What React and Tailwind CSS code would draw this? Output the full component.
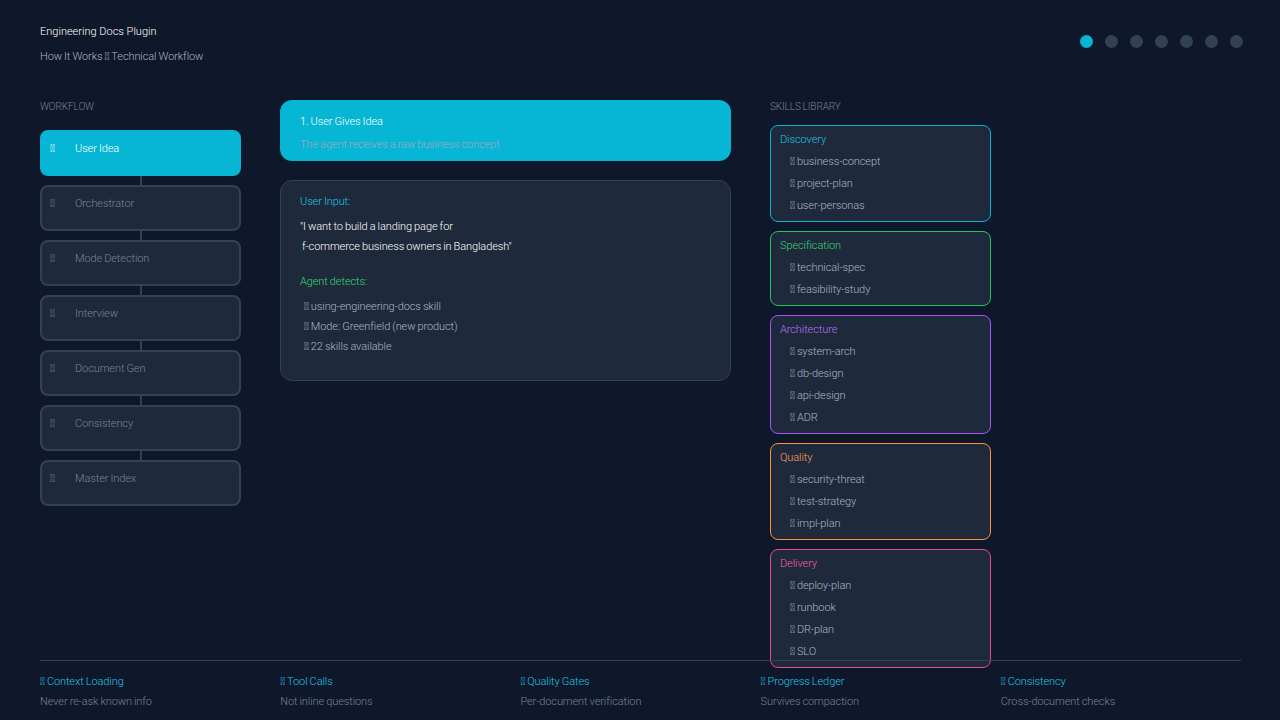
const STEPS = ["User Idea", "Orchestrator", "Mode Detection", "Interview", "Document Gen", "Consistency", "Master Index"];
const T = "\u{3FFFD}";
const GROUPS = [
  { name: "Discovery", box: "border-[#06b6d4]", text: "text-[#22c5e3]", items: ["business-concept", "project-plan", "user-personas"] },
  { name: "Specification", box: "border-[#22c55e]", text: "text-[#34d870]", items: ["technical-spec", "feasibility-study"] },
  { name: "Architecture", box: "border-[#a855f7]", text: "text-[#b871fa]", items: ["system-arch", "db-design", "api-design", "ADR"] },
  { name: "Quality", box: "border-[#fb923c]", text: "text-[#fda05a]", items: ["security-threat", "test-strategy", "impl-plan"] },
  { name: "Delivery", box: "border-[#ec4899]", text: "text-[#f45fa8]", items: ["deploy-plan", "runbook", "DR-plan", "SLO"] },
];
const FOOT = [
  ["Context Loading", "Never re-ask known info"],
  ["Tool Calls", "Not inline questions"],
  ["Quality Gates", "Per-document verification"],
  ["Progress Ledger", "Survives compaction"],
  ["Consistency", "Cross-document checks"],
];

export default function App() {
  return (
    <div className="relative h-[720px] w-[1280px] overflow-hidden bg-[#0f172a] font-['Roboto',sans-serif] text-[11px] [font-weight:350] tracking-[-0.1px] [word-spacing:-0.5px]">
      <div className="flex items-start justify-between pl-10 pr-[37px] pt-[23px]">
        <div>
          <div className="h-[18px] leading-[18px] tracking-normal [word-spacing:0] text-white">Engineering Docs Plugin</div>
          <div className="mt-[7px] h-[18px] leading-[18px] text-[#a9b6c9]">How It Works {T} Technical Workflow</div>
        </div>
        <div className="mt-[12px] flex gap-3">
          {[0, 1, 2, 3, 4, 5, 6].map((i) => (
            <div key={i} className={`h-[13px] w-[13px] rounded-full ${i === 0 ? "bg-[#06b6d4]" : "bg-[#334155]"}`} />
          ))}
        </div>
      </div>

      <div className="mt-[33px] flex items-start pl-10">
        <div className="w-[201px]">
          <div className="mt-[1px] h-[14px] leading-[14px] text-[10px] text-[#76859b]">WORKFLOW</div>
          <div className="mt-[16px] flex flex-col">
            {STEPS.map((s, i) => (
              <div key={s} className="flex flex-col items-center">
                {i > 0 && <div className="h-[9px] w-[2px] bg-[#334155]" />}
                <div className={`flex h-[46px] w-full items-start gap-[20px] rounded-[8px] border-2 pl-2 pt-[8px] leading-[18px] ${i === 0 ? "border-[#06b6d4] bg-[#06b6d4] text-white" : "border-[#334155] bg-[#1e293b] text-[#76859b]"}`}>
                  <span className="w-[5px]">{T}</span>
                  <span>{s}</span>
                </div>
              </div>
            ))}
          </div>
        </div>

        <div className="ml-[39px] mt-[1px] w-[451px]">
          <div className="h-[61px] rounded-[12px] bg-[#06b6d4] px-5 pt-[12px]">
            <div className="mt-[1px] h-[18px] leading-[18px] text-white">1. User Gives Idea</div>
            <div className="mt-[5px] h-[18px] leading-[18px] text-[#a3a9c4]">The agent receives a raw business concept</div>
          </div>
          <div className="mt-[19px] h-[201px] rounded-[12px] border border-[#334155] bg-[#1e293b] pl-[19px] pt-[12px]">
            <div className="h-[18px] leading-[18px] text-[#22c5e3]">User Input:</div>
            <div className="mt-[6px] leading-[20px] text-white">
              <div>"I want to build a landing page for</div>
              <div className="pl-[2px]">f-commerce business owners in Bangladesh"</div>
            </div>
            <div className="mt-[16px] h-[18px] leading-[18px] text-[#34d870]">Agent detects:</div>
            <div className="mt-[6px] pl-[4px] leading-[20px] text-[#a9b6c9]">
              <div>{T} using-engineering-docs skill</div>
              <div>{T} Mode: Greenfield (new product)</div>
              <div>{T} 22 skills available</div>
            </div>
          </div>
        </div>

        <div className="ml-[39px] w-[221px]">
          <div className="mt-[1px] h-[14px] leading-[14px] text-[10px] text-[#76859b]">SKILLS LIBRARY</div>
          <div className="mt-[11px] flex flex-col gap-[9px]">
            {GROUPS.map((g) => (
              <div key={g.name} className={`rounded-[8px] border ${g.box} bg-[#1e293b] pb-[6px] pl-[9px] pt-[5px]`}>
                <div className={`h-[18px] leading-[18px] ${g.text}`}>{g.name}</div>
                <div className="mt-[4px] flex flex-col gap-[4px] pl-[10px] text-[#a9b6c9]">
                  {g.items.map((it) => (
                    <div key={it} className="h-[18px] leading-[18px]">{T} {it}</div>
                  ))}
                </div>
              </div>
            ))}
          </div>
        </div>
      </div>

      <div className="absolute bottom-0 left-10 h-[60px] w-[1201px] border-t border-[#334155] pt-[12px]">
        <div className="grid grid-cols-5">
          {FOOT.map(([a, b]) => (
            <div key={a} className="w-[240px]">
              <div className="h-[18px] leading-[18px] text-[#22c5e3]">{T} {a}</div>
              <div className="mt-[2px] h-[18px] leading-[18px] text-[#76859b]">{b}</div>
            </div>
          ))}
        </div>
      </div>
    </div>
  );
}
